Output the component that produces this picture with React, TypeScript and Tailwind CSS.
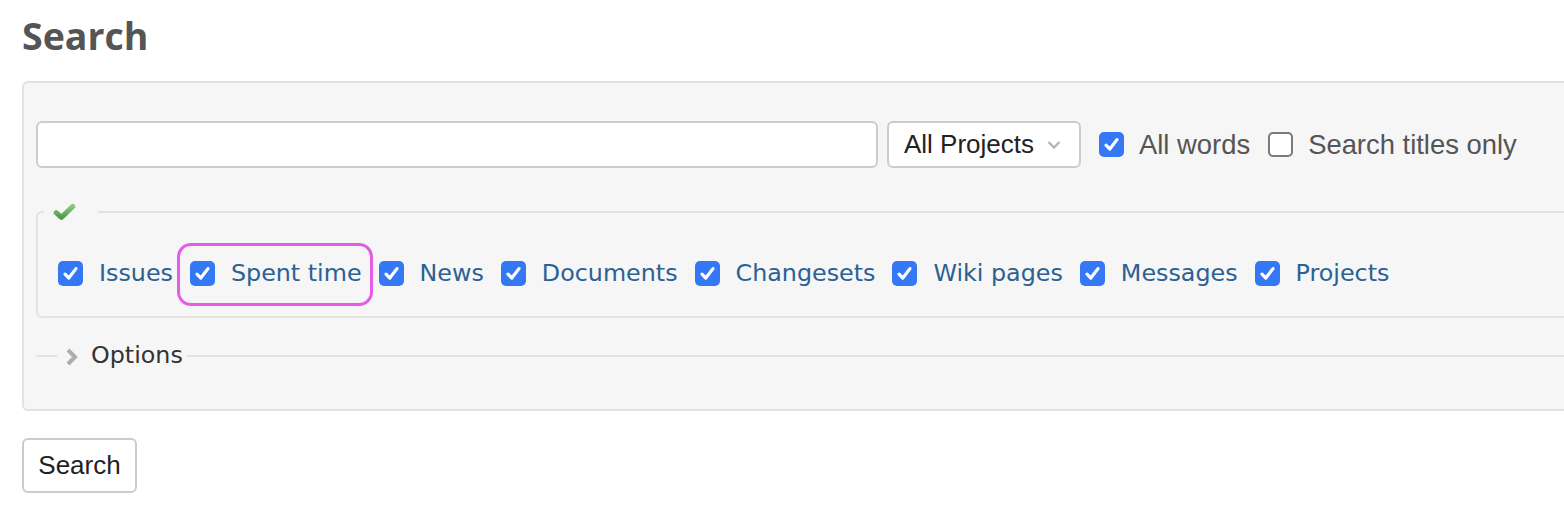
import { ReactNode } from "react";

const TYPES = ["Issues", "Spent time", "News", "Documents", "Changesets", "Wiki pages", "Messages", "Projects"];

function Box({ checked }: { checked: boolean }) {
    if (!checked) {
        return <span className="inline-block w-[25px] h-[25px] shrink-0 rounded-[5px] border-2 border-[#7a7a7a] bg-white" />;
    }
    return (
        <span className="inline-flex w-[25px] h-[25px] shrink-0 items-center justify-center rounded-[5px] bg-[#3478f6]">
            <svg width="17" height="17" viewBox="0 0 17 17" fill="none">
                <path d="M3 9.2 L6.8 13 L14 3.6" stroke="#fff" strokeWidth="3.2" strokeLinecap="round" strokeLinejoin="round" />
            </svg>
        </span>
    );
}

function TypeItem({ label, highlight }: { label: string; highlight?: boolean }) {
    return (
        <span className="relative flex items-center mr-[17px]">
            {highlight && (
                <span className="absolute -left-[13px] -right-[11px] -top-[17px] -bottom-[20px] rounded-[14px] border-[3px] border-[#e45ce8]" />
            )}
            <Box checked />
            <span className="ml-[16px] text-[#2b6193]">{label}</span>
        </span>
    );
}

function GreenCheck() {
    return (
        <svg width="23" height="18" viewBox="0 0 23 18" fill="none">
            <defs>
                <linearGradient id="gc" x1="0" y1="0" x2="0" y2="1">
                    <stop offset="0" stopColor="#86c97a" />
                    <stop offset="1" stopColor="#4f9c49" />
                </linearGradient>
            </defs>
            <path d="M3.2 9.6 L8.4 14.4 L19.8 3.4" stroke="url(#gc)" strokeWidth="5" strokeLinecap="round" strokeLinejoin="round" />
        </svg>
    );
}

function Label({ children }: { children: ReactNode }) {
    return <span className="ml-[15px] text-[#555] text-[27.4px]">{children}</span>;
}

export default function App() {
    return (
        <div className="w-[1564px] h-[514px] overflow-hidden bg-white pl-[22px]">
            <h2 className="mt-[12px] mb-[21px] leading-[48px] text-[37.5px] font-bold text-[#555] font-['Open_Sans',sans-serif]">
                Search
            </h2>

            <div className="w-[1600px] rounded-[6px] border-2 border-[#e2e2e2] bg-[#f6f6f6] pl-[12px] pt-[38px] pb-[39px]">
                {/* query row */}
                <div className="flex items-center text-[26px] font-['Liberation_Sans',Arial,sans-serif]">
                    <div className="w-[842px] h-[47px] rounded-[6px] border-2 border-[#cccccc] bg-white" />
                    <div className="ml-[9px] w-[194px] h-[47px] rounded-[6px] border-2 border-[#cccccc] bg-white flex items-center pl-[15px] pr-[18px] justify-between text-[#222]">
                        <span>All Projects</span>
                        <svg width="14" height="10" viewBox="0 0 14 10" fill="none">
                            <path d="M1.5 2 L7 7.5 L12.5 2" stroke="#b4b4b4" strokeWidth="2.4" />
                        </svg>
                    </div>
                    <span className="ml-[18px] flex items-center">
                        <Box checked />
                        <Label>All words</Label>
                    </span>
                    <span className="ml-[18px] flex items-center">
                        <Box checked={false} />
                        <Label>Search titles only</Label>
                    </span>
                </div>

                {/* object types */}
                <fieldset className="mt-[34px] rounded-tl-[6px] rounded-bl-[6px] border-2 border-[#e2e2e2] pl-[6px] pb-[30px]">
                    <legend className="h-[20px] w-[54px] pl-[9px] flex items-center">
                        <GreenCheck />
                    </legend>
                    <div className="flex items-center pt-[38px] pl-[14px] h-[64px] text-[23.8px] leading-[26px] font-['DejaVu_Sans',Verdana,sans-serif]">
                        {TYPES.map((t) => (
                            <TypeItem key={t} label={t} highlight={t === "Spent time"} />
                        ))}
                    </div>
                </fieldset>

                {/* options (collapsed) */}
                <fieldset className="mt-[24px] border-0 border-t-2 border-[#e2e2e2] pl-[21px]">
                    <legend className="px-[4px] h-[28px] flex items-center text-[23.8px] text-[#333] font-['DejaVu_Sans',Verdana,sans-serif]">
                        <span className="w-[30px] flex items-center pl-[4px] translate-y-[1px]">
                            <svg width="14" height="20" viewBox="0 0 14 20" fill="none">
                                <path d="M3 3 L10 10 L3 17" stroke="#adadad" strokeWidth="4" />
                            </svg>
                        </span>
                        Options
                    </legend>
                </fieldset>
            </div>

            <button className="mt-[27px] w-[115px] h-[55px] rounded-[6px] border-2 border-[#cccccc] bg-white text-[26px] text-[#222] font-['Liberation_Sans',Arial,sans-serif]">
                Search
            </button>
        </div>
    );
}
